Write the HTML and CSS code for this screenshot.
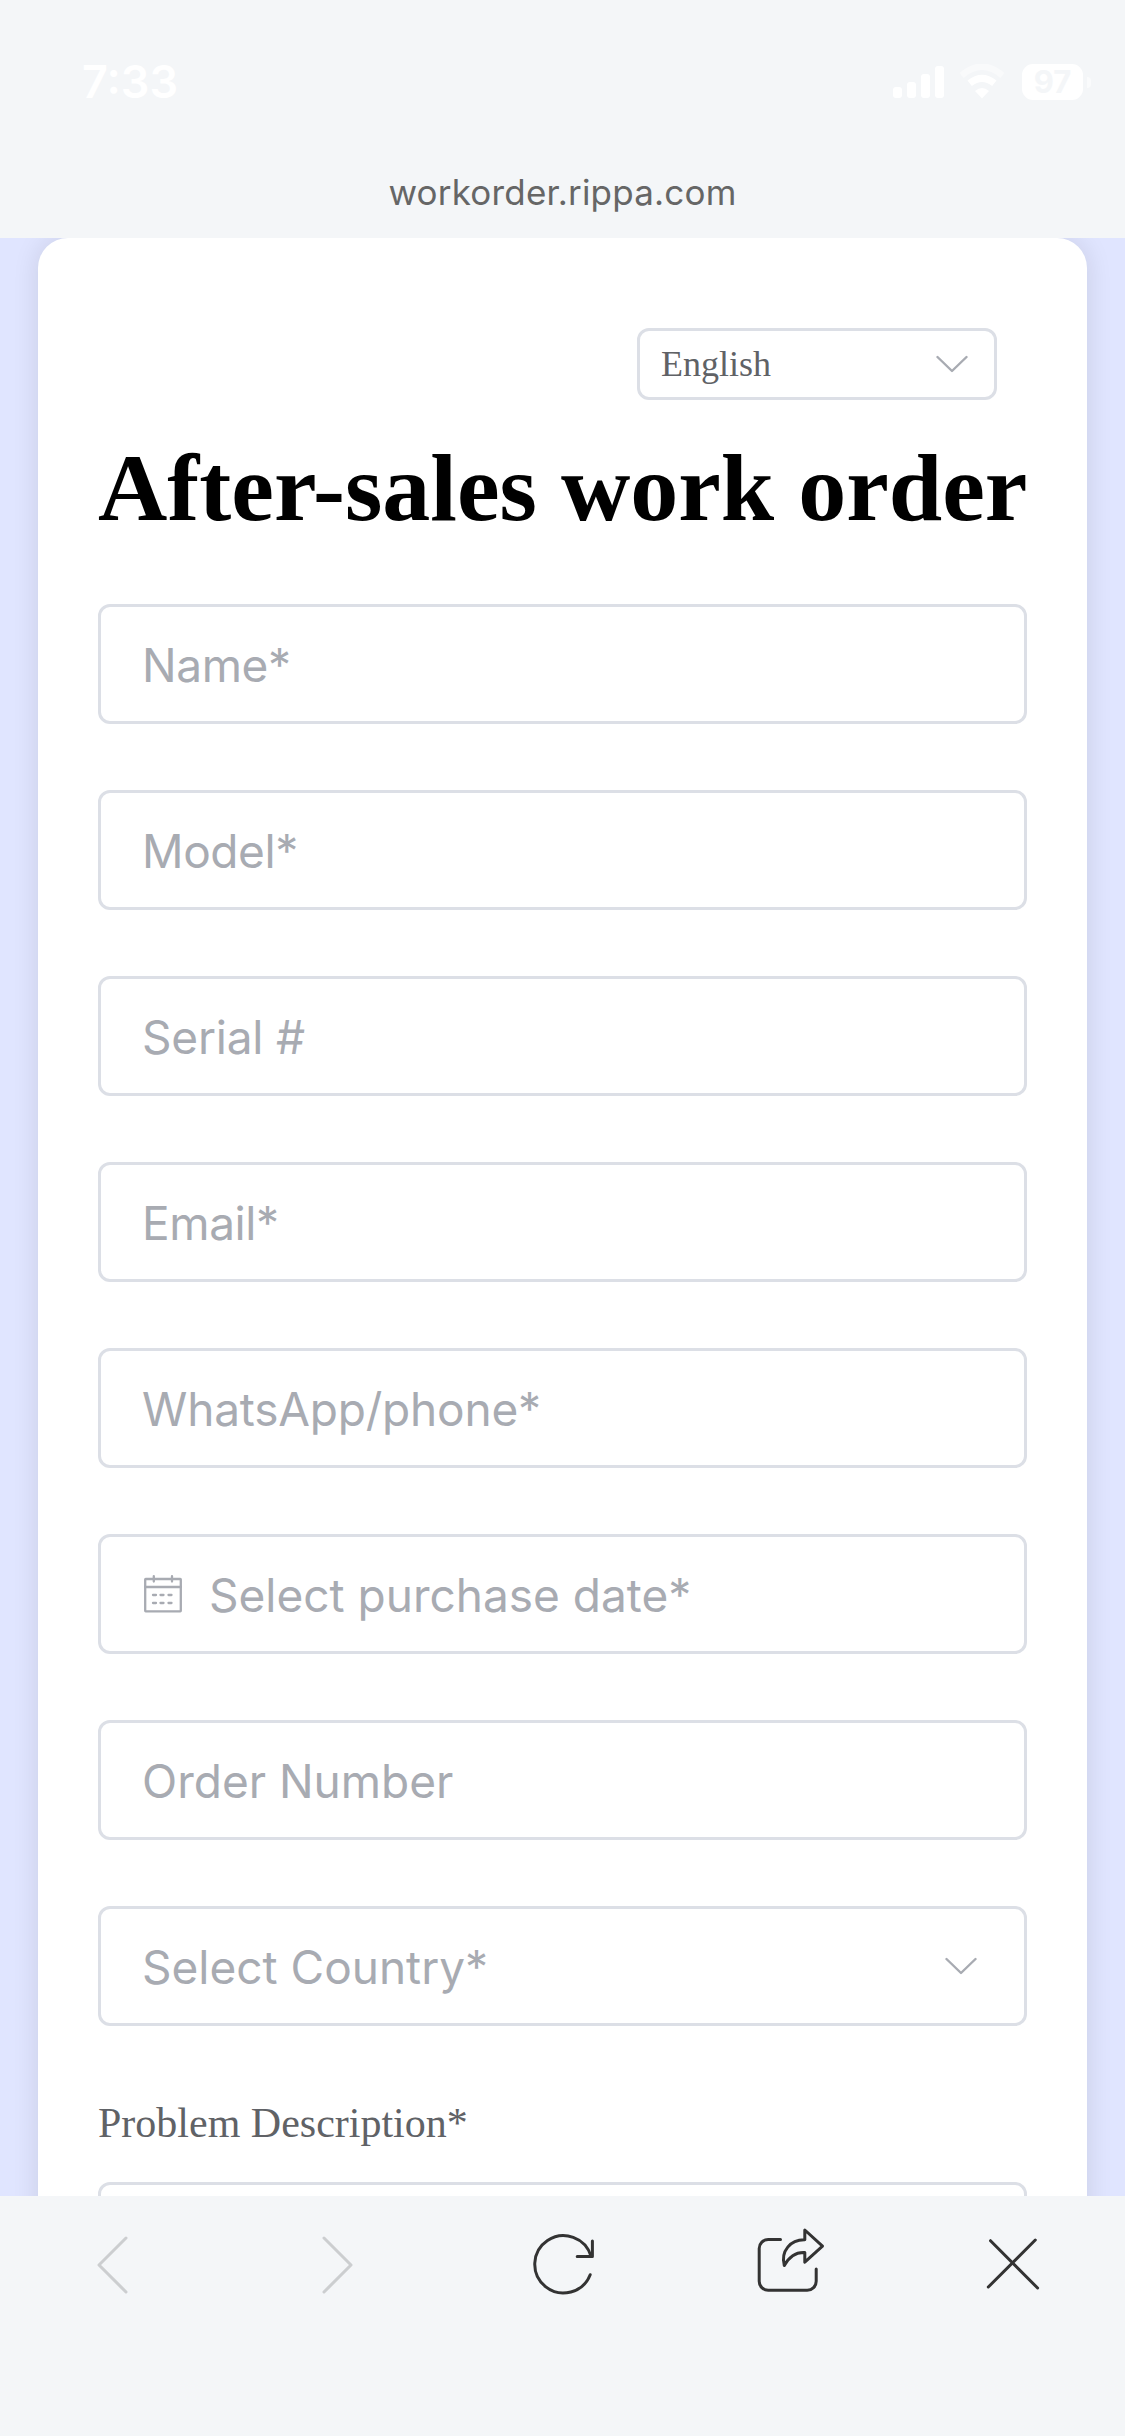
FILE: index.html
```html
<!DOCTYPE html>
<html lang="en">
<head>
<meta charset="utf-8">
<title>After-sales work order</title>
<link rel="stylesheet" href="styles.css">
</head>
<body>
<div class="screen">
  <header class="browser-top">
    <div class="status">
      <span class="time">7:33</span>
      <div class="indicators">
        <svg class="signal" width="51" height="36" viewBox="0 0 51 36" fill="#fff">
          <rect x="0" y="23" width="9" height="11" rx="3"/>
          <rect x="14" y="18" width="9" height="16" rx="3"/>
          <rect x="28" y="10" width="9" height="24" rx="3"/>
          <rect x="42" y="2" width="9" height="32" rx="3"/>
        </svg>
        <svg class="wifi" width="46" height="36" viewBox="0 0 46 36" fill="none">
          <path d="M2.500 11.500Q23 -6 43.500 11.500" stroke="#f9fafb" stroke-width="6.500"/>
          <path d="M10.700 19.300Q23 9.500 35.300 19.300" stroke="#fff" stroke-width="7"/>
          <path d="M16 27Q23 21 30 27L23 34.500Z" fill="#fff"/>
        </svg>
        <div class="battery"><span class="level">97</span><i class="nub"></i></div>
      </div>
    </div>
    <div class="address"><span>workorder.rippa.com</span></div>
  </header>

  <main class="page">
    <section class="card">
      <div class="language">
        <div class="select">
          <span>English</span>
          <svg class="chevron" width="32" height="18" viewBox="0 0 32 18"><path d="M1.500 2L16 16L30.500 2"/></svg>
        </div>
      </div>
      <h1 class="title">After-sales work order</h1>
      <div class="fields">
        <div class="field"><span class="tighter">Name*</span></div>
        <div class="field"><span class="tighter">Model*</span></div>
        <div class="field"><span class="tight">Serial #</span></div>
        <div class="field"><span class="tighter">Email*</span></div>
        <div class="field"><span class="tight">WhatsApp/phone*</span></div>
        <div class="field">
          <svg class="calendar" width="38" height="38" viewBox="0 0 38 38">
            <rect x="1.200" y="4" width="35.600" height="32.300" rx="0.500"/>
            <path d="M1.200 12H36.800M9.800 1.200V6.500M28 1.200V6.500"/>
            <path d="M9 20H12M16.500 20H19.500M24.500 20H27.500M9 28H12M16.500 28H19.500M24.500 28H27.500"/>
          </svg>
          <span>Select purchase date*</span>
        </div>
        <div class="field"><span>Order Number</span></div>
        <div class="field">
          <span>Select Country*</span>
          <svg class="chevron" width="32" height="18" viewBox="0 0 32 18"><path d="M1.500 2L16 16L30.500 2"/></svg>
        </div>
      </div>
      <div class="label">Problem Description*</div>
      <div class="textarea"></div>
    </section>
  </main>

  <nav class="toolbar">
    <div class="tool off"><svg viewBox="0 0 80 80"><path d="M53 13L26 40L53 67"/></svg></div>
    <div class="tool off"><svg viewBox="0 0 80 80"><path d="M26 13L53 40L26 67"/></svg></div>
    <div class="tool"><svg viewBox="0 0 80 80"><path d="M67.200 49.700A28.700 28.700 0 1 1 68 31.200"/><path d="M69.400 16V31.500H54.200"/></svg></div>
    <div class="tool"><svg viewBox="0 0 80 80"><path d="M32.500 14.500H20.200A9 9 0 0 0 11.200 23.500V56.300A9 9 0 0 0 20.200 65.300H59.200A9 9 0 0 0 68.200 56.300V44"/><path d="M56.800 5L74.500 21.200L56.800 37.200V27.500C48.500 27 41.500 31 36.300 40.500C32.500 26 42.500 14.500 56.800 14.800Z"/></svg></div>
    <div class="tool"><svg viewBox="0 0 80 80"><path d="M17.500 15.700L64.600 63M62.300 15L15.300 62"/></svg></div>
  </nav>
</div>
</body>
</html>
```
FILE: styles.css
```css
* { box-sizing: border-box; }
body {
  margin: 0;
  background: #f4f6f8;
}
.screen {
  width: 1125px;
  height: 2436px;
  display: flex;
  flex-direction: column;
  overflow: hidden;
  font-family: "Liberation Serif", "Times New Roman", serif;
}
svg { display: block; flex: none; }

/* Browser header */
.browser-top { height: 238px; flex: none; background: #f4f6f8; font-family: Inter, sans-serif; }
.status {
  height: 164px;
  padding: 0 34px 0 82px;
  display: flex;
  align-items: center;
  justify-content: space-between;
}
.time { font-size: 45px; font-weight: 600; line-height: 54px; color: #fff; }
.indicators { display: flex; align-items: center; }
.wifi { margin-left: 15px; }
.battery {
  position: relative;
  width: 61px;
  height: 36px;
  margin: 0 8px 0 17px;
  border-radius: 11px;
  background: #fff;
  color: #f4f6f8;
  font-size: 31px;
  font-weight: 700;
  line-height: 36px;
  text-align: center;
}
.nub {
  position: absolute;
  left: 65px;
  top: 13px;
  width: 4px;
  height: 11px;
  border-radius: 0 5px 5px 0;
  background: #fafbfc;
}
.address {
  height: 56px;
  text-align: center;
  font-size: 35px;
  line-height: 56px;
  letter-spacing: .2px;
  color: #666;
}

/* Form */
.page { height: 1958px; flex: none; overflow: hidden; padding: 0 38px; background: #e0e5ff; }
.card {
  height: 2200px;
  padding: 90px 60px 0;
  border-radius: 30px;
  background: #fff;
  box-shadow: 0 0 27px rgba(0, 0, 0, .11);
}
.language { display: flex; justify-content: flex-end; padding-right: 30px; }
.select {
  width: 360px;
  height: 72px;
  display: flex;
  align-items: center;
  justify-content: space-between;
  padding: 0 26px 0 21px;
  border: 3px solid #dcdfe6;
  border-radius: 12px;
  font-size: 36px;
  color: #606266;
}
.chevron path { fill: none; stroke: #a8abb2; stroke-width: 2.4; stroke-linecap: round; stroke-linejoin: round; }
.title {
  height: 204px;
  margin: 0;
  padding-top: 33px;
  font-size: 96px;
  font-weight: 700;
  line-height: 110px;
  color: #000;
  white-space: nowrap;
}
.fields { display: flex; flex-direction: column; gap: 66px; }
.field {
  height: 120px;
  display: flex;
  align-items: center;
  padding: 0 47px 0 41px;
  border: 3px solid #dcdfe6;
  border-radius: 12px;
  font-family: Inter, sans-serif;
  font-size: 46px;
  color: #a8abb2;
}
.field span { padding-top: 2px; }
.tight { letter-spacing: -.2px; }
.tighter { letter-spacing: -.4px; }
.field .chevron { margin-left: auto; }
.calendar { margin: 0 27px 0 2px; }
.calendar rect, .calendar path { fill: none; stroke: #a8abb2; stroke-width: 2.3; stroke-linecap: round; }
.label { height: 156px; padding-top: 72px; font-size: 42px; line-height: 50px; color: #606266; }
.textarea { height: 300px; border: 3px solid #dcdfe6; border-radius: 12px; }

/* Browser toolbar */
.toolbar {
  height: 240px;
  flex: none;
  display: grid;
  grid-template-columns: repeat(5, 1fr);
  justify-items: center;
  padding-top: 29px;
  background: #f4f6f8;
}
.tool svg { width: 80px; height: 80px; }
.tool path { fill: none; stroke: #333; stroke-width: 3; stroke-linecap: round; stroke-linejoin: round; }
.off path { stroke: #ccced0; }
```
